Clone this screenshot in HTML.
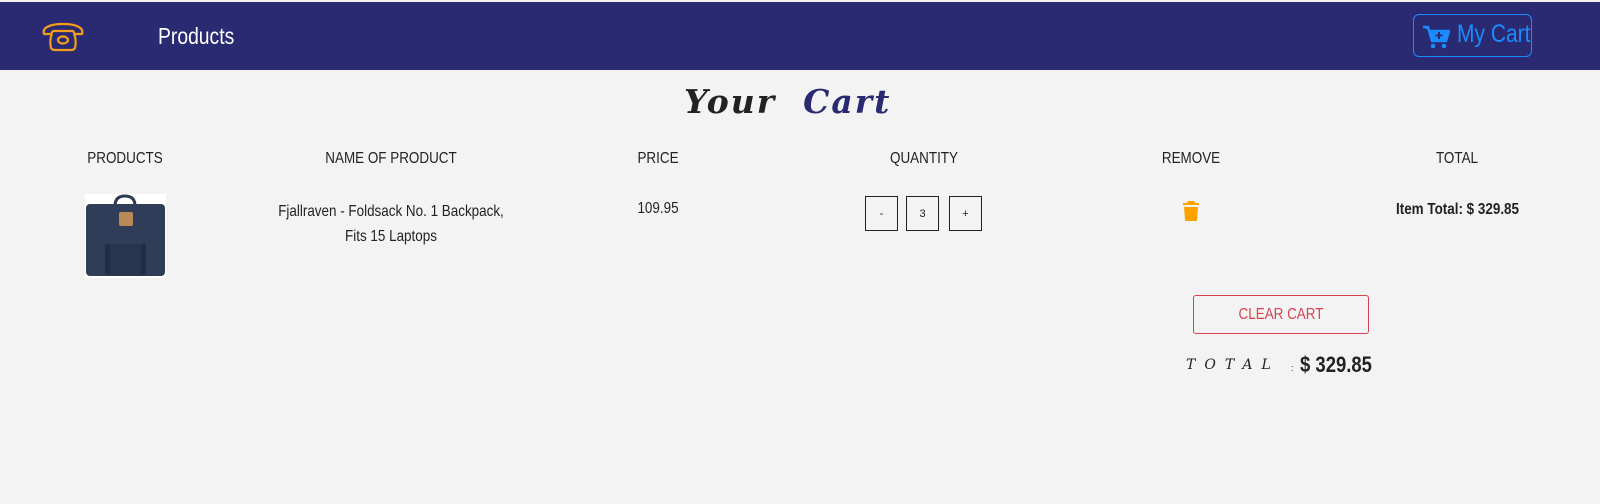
<!DOCTYPE html>
<html><head><style>
*{margin:0;padding:0;box-sizing:border-box}
body{width:1600px;height:504px;background:#f3f3f3;position:relative;overflow:hidden;font-family:"Liberation Sans",sans-serif;color:#222}
.nav{position:absolute;left:0;top:2px;width:1600px;height:68px;background:#2a2a72}
.a{position:absolute;white-space:nowrap}
.n{transform:scaleX(.84);transform-origin:left center}
.c{transform:translateX(-50%) scaleX(.84);transform-origin:center;text-align:center}
.h{top:150px;font-size:16px}
.box{position:absolute;top:196px;width:33px;height:35px;border:1.5px solid #222;font-size:11px;display:flex;align-items:center;justify-content:center}
</style></head><body>
<div class="nav"></div>
<svg class="a" style="left:41px;top:22px" width="44" height="30" viewBox="0 0 44 30"><path d="M3 12 C1 6 8 2 22 2 C36 2 43 6 41 12 L34 12 L32 9 L12 9 L10 12 Z" fill="none" stroke="#f29d1c" stroke-width="2.2" stroke-linejoin="round"/><path d="M11 12 C9 16 9 22 10 26 Q11 28 14 28 L30 28 Q33 28 34 26 C35 22 35 16 33 12" fill="none" stroke="#f29d1c" stroke-width="2.2"/><ellipse cx="22" cy="18" rx="5" ry="3.5" fill="none" stroke="#f29d1c" stroke-width="2.2"/></svg>
<div class="a n" style="left:158px;top:23px;color:#fff;font-size:23px">Products</div>
<div class="a" style="left:1413px;top:14px;width:119px;height:43px;border:1.5px solid #1a8cff;border-radius:6px"></div>
<svg class="a" style="left:1422px;top:25px" width="28" height="24" viewBox="0 0 28 24"><path d="M1 2 H6 L10 16 H24 L27 6 H8" fill="#1a8cff" stroke="#1a8cff" stroke-width="2.5" stroke-linejoin="round"/><circle cx="11" cy="21" r="2.3" fill="#1a8cff"/><circle cx="22" cy="21" r="2.3" fill="#1a8cff"/><path d="M17 7 V14 M13.5 10.5 H20.5" stroke="#2a2a72" stroke-width="2"/></svg>
<div class="a n" style="left:1457px;top:20px;color:#1a8cff;font-size:25px">My Cart</div>
<div class="a" style="left:684px;top:82px;font-family:'DejaVu Serif','Liberation Serif',serif;font-style:italic;font-weight:bold;font-size:33px;letter-spacing:2px"><span style="color:#222">Your</span>&nbsp;&nbsp;<span style="color:#2a2a72">Cart</span></div>
<div class="a c h" style="left:125px">PRODUCTS</div>
<div class="a c h" style="left:391px">NAME OF PRODUCT</div>
<div class="a c h" style="left:658px">PRICE</div>
<div class="a c h" style="left:924px">QUANTITY</div>
<div class="a c h" style="left:1191px">REMOVE</div>
<div class="a c h" style="left:1457px">TOTAL</div>
<svg class="a" style="left:85px;top:194px" width="81" height="84" viewBox="0 0 81 84"><rect width="81" height="84" fill="#fff"/><path d="M30 12 Q30 2 40 2 Q50 2 50 12" fill="none" stroke="#2c3a52" stroke-width="3"/><rect x="1" y="10" width="79" height="72" rx="4" fill="#2f3d58"/><rect x="34" y="18" width="14" height="14" rx="2" fill="#b98a55"/><rect x="22" y="50" width="38" height="32" fill="#28354e"/><rect x="20" y="50" width="5" height="30" fill="#222d44"/><rect x="56" y="50" width="5" height="30" fill="#222d44"/></svg>
<div class="a c" style="left:391px;top:199px;font-size:16px;line-height:25px">Fjallraven - Foldsack No. 1 Backpack,<br>Fits 15 Laptops</div>
<div class="a c" style="left:658px;top:200px;font-size:16px">109.95</div>
<div class="box" style="left:865px">-</div>
<div class="box" style="left:906px">3</div>
<div class="box" style="left:949px">+</div>
<svg class="a" style="left:1182px;top:200px" width="18" height="22" viewBox="0 0 18 22"><path d="M6 1 H12 L13 3 H17 V5 H1 V3 H5 Z" fill="#ffa200"/><path d="M2 7 H16 L15 20 Q15 21 14 21 H4 Q3 21 3 20 Z" fill="#ffa200"/></svg>
<div class="a n" style="left:1396px;top:201px;font-size:16px;font-weight:bold">Item Total: $ 329.85</div>
<div class="a" style="left:1193px;top:295px;width:176px;height:39px;border:1px solid #d9414e;border-radius:3px;"></div>
<div class="a c" style="left:1281px;top:306px;color:#d9414e;font-size:16px">CLEAR CART</div>
<div class="a" style="left:1186px;top:357px;font-family:'DejaVu Serif',serif;font-style:italic;font-size:14px;letter-spacing:9px">TOTAL</div>
<div class="a" style="left:1291px;top:363px;font-size:9px">:</div>
<div class="a n" style="left:1300px;top:352px;font-size:22px;font-weight:bold">$ 329.85</div>
</body></html>
